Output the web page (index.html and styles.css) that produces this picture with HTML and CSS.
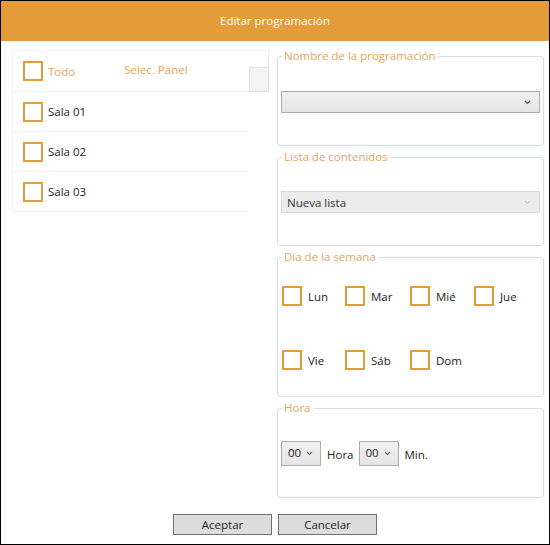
FILE: index.html
```html
<!doctype html>
<html lang="es">
  <head>
    <meta charset="UTF-8" />
    <title>Editar programación</title>
    <link rel="stylesheet" href="styles.css">
  </head>
  <body>
    <div class="window">
      <header class="title-bar">Editar programación</header>

      <div class="main">
        <div class="panel-list">
          <div class="list-head">
            <span class="check"></span>
            <span class="todo">Todo</span>
            <span class="col-title">Selec. Panel</span>
            <span class="head-filler"></span>
          </div>
          <div class="list-row"><span class="check"></span><span>Sala 01</span></div>
          <div class="list-row"><span class="check"></span><span>Sala 02</span></div>
          <div class="list-row"><span class="check"></span><span>Sala 03</span></div>
        </div>

        <div class="side">
          <fieldset class="group">
            <legend>Nombre de la programación</legend>
            <div class="group-body g-name">
              <div class="combo">
                <span></span>
                <svg width="7" height="5" viewBox="0 0 7 5"><path d="M1 1 L3.5 3.5 L6 1" fill="none" stroke="#555" stroke-width="1.2"/></svg>
              </div>
            </div>
          </fieldset>

          <fieldset class="group">
            <legend>Lista de contenidos</legend>
            <div class="group-body g-list">
              <div class="combo disabled">
                <span>Nueva lista</span>
                <svg width="7" height="5" viewBox="0 0 7 5"><path d="M1 1 L3.5 3.5 L6 1" fill="none" stroke="#c4c4c4" stroke-width="1.2"/></svg>
              </div>
            </div>
          </fieldset>

          <fieldset class="group">
            <legend>Día de la semana</legend>
            <div class="group-body g-days">
              <label class="day"><span class="check"></span>Lun</label>
              <label class="day"><span class="check"></span>Mar</label>
              <label class="day"><span class="check"></span>Mié</label>
              <label class="day"><span class="check"></span>Jue</label>
              <label class="day"><span class="check"></span>Vie</label>
              <label class="day"><span class="check"></span>Sáb</label>
              <label class="day"><span class="check"></span>Dom</label>
            </div>
          </fieldset>

          <fieldset class="group">
            <legend>Hora</legend>
            <div class="group-body g-time">
              <div class="combo small">
                <span>00</span>
                <svg width="7" height="5" viewBox="0 0 7 5"><path d="M1 1 L3.5 3.5 L6 1" fill="none" stroke="#666" stroke-width="1.1"/></svg>
              </div>
              <span class="unit">Hora</span>
              <div class="combo small">
                <span>00</span>
                <svg width="7" height="5" viewBox="0 0 7 5"><path d="M1 1 L3.5 3.5 L6 1" fill="none" stroke="#666" stroke-width="1.1"/></svg>
              </div>
              <span class="unit">Min.</span>
            </div>
          </fieldset>
        </div>
      </div>

      <div class="actions">
        <button class="btn">Aceptar</button>
        <button class="btn">Cancelar</button>
      </div>
    </div>
  </body>
</html>
```

FILE: styles.css
```css
* {
  box-sizing: border-box;
  margin: 0;
  padding: 0;
}
body {
  font-family: 'Open Sans', 'Noto Sans', sans-serif;
  font-size: 11.5px;
  color: #222;
  background: #fff;
}
.window {
  width: 550px;
  height: 545px;
  border: 1px solid #000;
  display: flex;
  flex-direction: column;
}
.title-bar {
  height: 40px;
  background: #e39c39;
  color: #fff;
  text-align: center;
  line-height: 40px;
  font-size: 11.5px;
}
.main {
  display: flex;
  padding: 8px 0 0 11px;
  gap: 8px;
}

/* left list */
.panel-list {
  width: 257px;
  margin-top: 1px;
}
.check {
  display: inline-block;
  width: 20px;
  height: 20px;
  border: 2px solid #e39c39;
  background: #fff;
  flex: none;
}
.list-head {
  height: 42px;
  display: flex;
  align-items: center;
  padding-left: 10px;
  border-top: 1px solid #f4f4f4;
  border-left: 1px solid #f4f4f4;
  border-right: 1px solid #ececec;
  border-bottom: 1px solid #f2f2f2;
  position: relative;
}
.todo {
  color: #e8a45c;
  margin-left: 5px;
  margin-top: 1px;
}
.col-title {
  color: #e8a45c;
  margin-left: 49px;
  margin-top: -3px;
}
.head-filler {
  position: absolute;
  right: -1px;
  bottom: -1px;
  width: 20px;
  height: 25px;
  background: #f3f3f3;
  border: 1px solid #e2e2e2;
}
.list-row {
  width: 236px;
  height: 40px;
  display: flex;
  align-items: center;
  gap: 5px;
  padding-left: 10px;
  border-left: 1px solid #f4f4f4;
  border-bottom: 1px solid #f2f2f2;
}

/* right side */
.side {
  width: 267px;
  display: flex;
  flex-direction: column;
  gap: 4px;
}
.group {
  border: 1px solid #d5dfe4;
  border-radius: 3px;
  padding: 0 3px;
}
.group legend {
  margin-left: 1px;
  padding: 0 2px;
  color: #e8a45c;
  font-size: 11.5px;
  line-height: 14px;
}
.g-name {
  height: 82px;
  padding-top: 28px;
}
.g-list {
  height: 81px;
  padding-top: 27px;
}
.g-days {
  height: 132px;
  padding: 22px 0 0 1px;
  display: grid;
  grid-template-columns: 63px 65px 64px 60px;
  grid-auto-rows: 20px;
  row-gap: 44px;
}
.day {
  display: flex;
  align-items: center;
  gap: 6px;
}
.g-time {
  height: 82px;
  padding-top: 26px;
  display: flex;
  align-items: flex-start;
}
.unit {
  line-height: 25px;
  margin: 1px 5px 0 6px;
}

.combo {
  height: 22px;
  border: 1px solid #acacac;
  background: linear-gradient(#f0f0f0, #e5e5e5);
  display: flex;
  align-items: center;
  justify-content: space-between;
  padding: 0 8px 0 5px;
}
.combo.disabled {
  border-color: #d9d9d9;
  background: #ececec;
  color: #333;
}
.combo.small {
  width: 40px;
  height: 25px;
  align-items: flex-start;
  padding: 3px 7px 0 6px;
}
.combo.small svg {
  margin-top: 6px;
}

.actions {
  display: flex;
  justify-content: center;
  gap: 6px;
  margin-top: auto;
  margin-bottom: 9px;
}
.btn {
  width: 99px;
  height: 21px;
  border: 1px solid #707070;
  background: #dddddd;
  font-family: inherit;
  font-size: 11.5px;
  color: #222;
}
```
